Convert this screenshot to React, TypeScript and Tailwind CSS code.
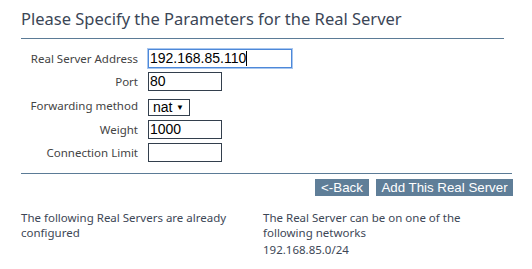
const rows = [
  { label: "Real Server Address", value: "192.168.85.110", width: "w-[144px]", focus: true },
  { label: "Port", value: "80", width: "w-[74px]" },
  { label: "Forwarding method", select: true },
  { label: "Weight", value: "1000", width: "w-[74px]" },
  { label: "Connection Limit", value: "", width: "w-[74px]" },
]

export default function App() {
  return (
    <div className="w-[532px] h-[269px] overflow-hidden bg-white font-['Noto_Sans',sans-serif] text-[11.5px] text-[#444]">
      <div className="pl-[21px] pr-[20px] pt-[8px]">
        <h1 className="text-[16.5px] text-[#3b4656] leading-[22px] pb-[8px] border-b border-[#5b7b96] w-[483px]">
          Please Specify the Parameters for the Real Server
        </h1>

        {/* Form */}
        <div className="mt-[10px] flex flex-col gap-[4px]">
          {rows.map((row) => (
            <div key={row.label} className="flex items-center">
              <div className="w-[127px] shrink-0 whitespace-nowrap text-right pr-[10px] leading-[16px]">
                {row.label}
              </div>
              {row.select ? (
                <div className="mt-[4px] h-[17px] w-[42px] border border-[#333f4d] flex items-center justify-between pl-[4px] pr-[5px] font-['Liberation_Sans',sans-serif] text-[14px] text-black">
                  <span className="leading-[15px]">nat</span>
                  <span className="text-[8px] leading-none">▼</span>
                </div>
              ) : (
                <div
                  className={`${row.width} h-[19px] flex items-center pl-[1px] font-['Liberation_Sans',sans-serif] text-[14px] text-black ${
                    row.focus ? "border border-[#4d88d9] ring-1 ring-[#a9c7ef]" : "border border-[#333f4d]"
                  }`}
                >
                  <span className="leading-[17px]">{row.value}</span>
                  {row.focus && <span className="w-[1px] h-[15px] bg-black" />}
                </div>
              )}
            </div>
          ))}
        </div>

        <div className="mt-[11px] border-t border-[#5b7b96] w-[491px]" />

        <div className="mt-[5px] flex justify-end gap-[7px] w-[492px]">
          <button className="w-[54px] h-[17px] bg-[#5f7e98] text-white font-['Liberation_Sans',sans-serif] text-[13.3px] leading-[17px] text-center">
            &lt;-Back
          </button>
          <button className="w-[137px] h-[17px] bg-[#5f7e98] text-white font-['Liberation_Sans',sans-serif] text-[13.3px] leading-[17px] text-center">
            Add This Real Server
          </button>
        </div>

        <div className="mt-[14px] flex leading-[15px] text-[#3d4756]">
          <div className="w-[242px]">
            <p className="w-[215px]">The following Real Servers are already configured</p>
          </div>
          <div className="w-[215px]">
            <p>The Real Server can be on one of the following networks</p>
            <p className="mt-[2px]">192.168.85.0/24</p>
          </div>
        </div>
      </div>
    </div>
  )
}
